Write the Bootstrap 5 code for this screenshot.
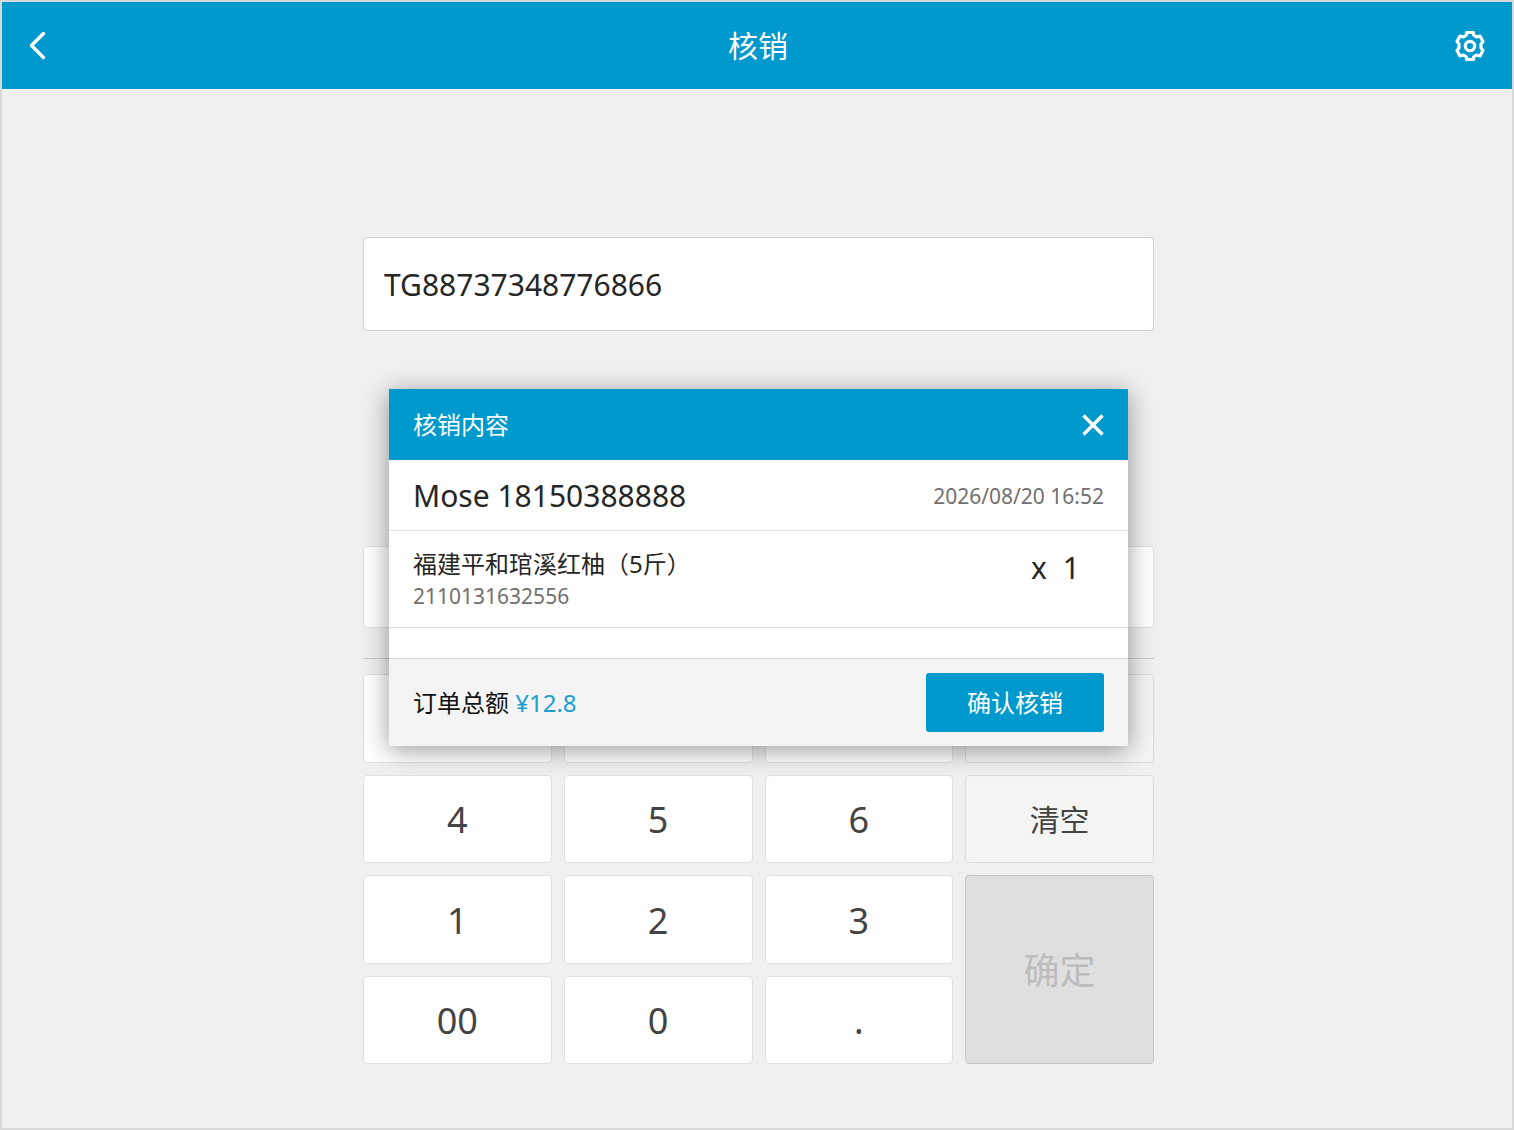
<!DOCTYPE html>
<html lang="zh-CN">
<head>
<meta charset="utf-8">
<meta name="viewport" content="width=device-width, initial-scale=1">
<title>核销</title>
<link rel="stylesheet" href="https://cdn.jsdelivr.net/npm/bootstrap@5.3.0/dist/css/bootstrap.min.css">
<style>
:root { --brand: #0099cd; --frame: #d9d9d9; --ink: #262626; }
body { font-family: "Noto Sans", "Noto Sans CJK SC", sans-serif; color: var(--ink); }
.screen { background: #f0f0f0; border: 2px solid var(--frame); }
.topbar { background: var(--brand); color: #fff; height: 87px; padding: 0 26px 0 24px; }
.topbar h1 { font-size: 30px; line-height: 40px; font-weight: 400; }
.icon-btn { color: #fff; border: 0; padding: 0; line-height: 1; }
.icon-btn svg { display: block; }
.stage { padding-left: 3px; }
.desk { max-width: 791px; padding-top: 148px; padding-bottom: 62px; }
.field { border: 1px solid #d0d0d0; border-radius: 4px; font-size: 30px; color: var(--ink); padding: 0 20px; }
.code-field { height: 94px; margin-bottom: 215px; }
.amount-field { height: 82px; border-color: #e0e0e0; }
.divider { border-top: 1px solid #c8c8c8; opacity: 1; margin: 30px 0 15px; }
.keypad { display: grid; grid-template-columns: repeat(4, 1fr); grid-auto-rows: 1fr; gap: 12px; height: 390px; }
.key { background: #fff; border: 1px solid #e0e0e0; border-radius: 4px; font-size: 36px; line-height: 48px; color: #444; padding: 3px 0 0; }
.key-tool { background: #f4f4f2; border-color: #dcdcda; font-size: 30px; }
.key-ok, .key-ok:disabled { grid-row: span 2; background: #dfdfdf; border-color: #c6c6c6; color: #bcbcbc; opacity: 1; }
.overlay { inset: 0; pointer-events: none; padding: 5px 0 0 3px; }
.sheet { width: 739px; background: #fff; box-shadow: 0 4px 24px rgba(0, 0, 0, .4); pointer-events: auto; font-size: 24px; line-height: 32px; }
.sheet header { background: var(--brand); color: #fff; height: 71px; padding: 0 24px; }
.sheet h2 { font-size: 24px; line-height: 32px; font-weight: 400; }
.customer { height: 71px; padding: 2px 24px 0; border-bottom: 1px solid #e3e3e3; }
.big { font-size: 30px; line-height: 40px; }
.soft { font-size: 21px; line-height: 32px; color: #707070; }
.goods { padding: 17px 24px 15px; border-bottom: 1px solid #dcdcdc; margin-bottom: 30px; }
.sheet footer { background: #f4f4f4; border-top: 1px solid #dcdcdc; height: 88px; padding: 0 24px; color: #111; }
.price { color: #18a0d0; }
.confirm { background: var(--brand); color: #fff; border: 0; border-radius: 3px; font-size: 24px; width: 178px; height: 59px; padding: 0; }
.confirm:hover { background: #0087b5; color: #fff; }
</style>
<script src="https://cdn.jsdelivr.net/npm/bootstrap@5.3.0/dist/js/bootstrap.bundle.min.js"></script>
</head>
<body>
<div class="screen position-relative min-vh-100">
  <nav class="topbar d-flex align-items-center justify-content-between">
    <button type="button" class="btn icon-btn" aria-label="返回">
      <svg width="36" height="30" viewBox="0 0 36 30" fill="none" stroke="currentColor" stroke-width="3.400" stroke-linecap="round" stroke-linejoin="round"><path d="M17.500 2.500 5.500 14.500 17.500 26.500"/></svg>
    </button>
    <h1 class="m-0">核销</h1>
    <button type="button" class="btn icon-btn" aria-label="设置">
      <svg width="32" height="32" viewBox="0 0 32 32" fill="none" stroke="currentColor" stroke-width="3.200" stroke-linejoin="round"><path d="M12.500 2.500H19.500V5L22.500 7 26 6 29 11.500 27 14V18L29 20.500 26 26 22.500 25 19.500 27V29.500H12.500V27L9.500 25 6 26 3 20.500 5 18V14L3 11.500 6 6 9.500 7 12.500 5Z"/><circle cx="16" cy="16" r="4.700"/></svg>
    </button>
  </nav>

  <div class="stage">
    <main class="desk mx-auto">
      <input type="text" class="form-control field code-field" aria-label="核销码" value="TG88737348776866">
      <input type="text" class="form-control field amount-field" aria-label="输入">
      <hr class="divider">
      <div class="keypad">
        <button type="button" class="btn key" aria-label="7"></button>
        <button type="button" class="btn key" aria-label="8"></button>
        <button type="button" class="btn key" aria-label="9"></button>
        <button type="button" class="btn key key-tool" aria-label="退格"></button>
        <button type="button" class="btn key">4</button>
        <button type="button" class="btn key">5</button>
        <button type="button" class="btn key">6</button>
        <button type="button" class="btn key key-tool">清空</button>
        <button type="button" class="btn key">1</button>
        <button type="button" class="btn key">2</button>
        <button type="button" class="btn key">3</button>
        <button type="button" class="btn key key-ok" disabled>确定</button>
        <button type="button" class="btn key">00</button>
        <button type="button" class="btn key">0</button>
        <button type="button" class="btn key">.</button>
      </div>
    </main>
  </div>

  <div class="overlay position-absolute d-flex align-items-center justify-content-center">
    <section class="sheet" role="dialog" aria-labelledby="sheet-title">
      <header class="d-flex align-items-center justify-content-between">
        <h2 class="m-0" id="sheet-title">核销内容</h2>
        <button type="button" class="btn icon-btn" aria-label="关闭">
          <svg width="22" height="22" viewBox="0 0 22 22" fill="none" stroke="currentColor" stroke-width="3.400"><path d="M1.500 1.500 20.500 20.500M20.500 1.500 1.500 20.500"/></svg>
        </button>
      </header>
      <div class="customer d-flex align-items-center justify-content-between">
        <span class="big">Mose 18150388888</span>
        <time class="soft" datetime="2026-08-20T16:52">2026/08/20 16:52</time>
      </div>
      <div class="goods d-flex align-items-start justify-content-between">
        <div>
          <div>福建平和琯溪红柚（5斤）</div>
          <div class="soft">2110131632556</div>
        </div>
        <div class="big d-flex gap-3 pe-4"><span>x</span><span>1</span></div>
      </div>
      <footer class="d-flex align-items-center justify-content-between">
        <div>订单总额 <span class="price">¥12.8</span></div>
        <button type="button" class="btn confirm">确认核销</button>
      </footer>
    </section>
  </div>
</div>
</body>
</html>
